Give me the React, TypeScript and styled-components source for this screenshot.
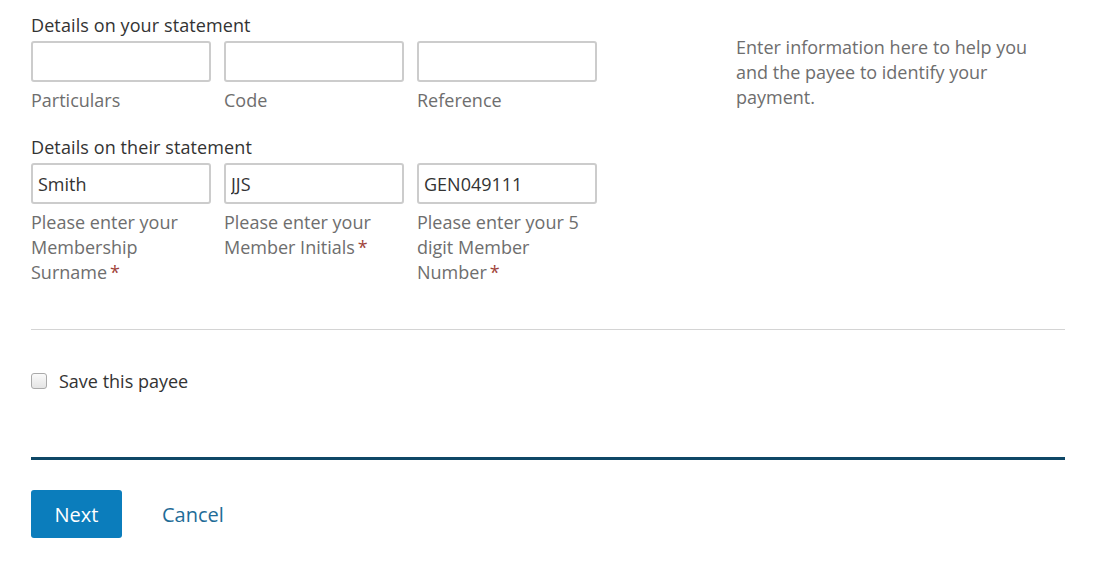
import * as React from 'react'
import styled, { createGlobalStyle } from 'styled-components'

const GlobalStyle = createGlobalStyle`
  body {
    margin: 0;
    background: #fff;
    font-family: 'Open Sans', 'Noto Sans', sans-serif;
    color: #333;
  }
`

const Page = styled.div`
  width: 1034px;
  padding: 13px 0 0 31px;
`

const TopSection = styled.div`
  display: flex;
  justify-content: space-between;
`

const FormColumn = styled.div`
  width: 565px;
`

const SectionTitle = styled.div`
  font-size: 18px;
  letter-spacing: 0.1px;
  line-height: 25px;
  color: #333;
  margin-bottom: 3px;
`

const FieldRow = styled.div`
  display: grid;
  grid-template-columns: repeat(3, 180px);
  column-gap: 13px;
  margin-bottom: 22px;
`

const Field = styled.div`
  display: flex;
  flex-direction: column;
`

const Input = styled.input`
  box-sizing: border-box;
  width: 180px;
  height: 41px;
  border: 2px solid #ccc;
  border-radius: 3px;
  padding: 0 5px;
  font-family: inherit;
  font-size: 18px;
  color: #333;
  outline: none;
`

const Hint = styled.div`
  font-size: 18px;
  line-height: 25px;
  color: #6e6e6e;
  margin-top: 6px;
`

const Star = styled.span`
  display: inline-block;
  color: #a0433a;
  margin-left: 3px;
`

const Aside = styled.div`
  width: 329px;
  margin-top: 22px;
  font-size: 18px;
  line-height: 25px;
  color: #6e6e6e;
`

const AsideText = styled.p`
  width: 306px;
  margin: 0;
`

const Divider = styled.hr<{ $thick?: boolean }>`
  border: none;
  margin: 0;
  height: ${p => (p.$thick ? '3px' : '1px')};
  background: ${p => (p.$thick ? '#0e4766' : '#d4d4d4')};
`

const CheckRow = styled.label`
  display: flex;
  align-items: center;
  gap: 12px;
  margin: 39px 0 64px;
  font-size: 18px;
  color: #333;
`

const Box = styled.span`
  box-sizing: border-box;
  width: 16px;
  height: 16px;
  border: 1px solid #aaa;
  border-radius: 3px;
  background: linear-gradient(#fafafa, #e4e4e4);
`

const Actions = styled.div`
  display: flex;
  align-items: center;
  gap: 40px;
  margin-top: 30px;
`

const PrimaryButton = styled.button`
  width: 91px;
  height: 48px;
  border: none;
  border-radius: 3px;
  background: #0b7dbc;
  color: #fff;
  font-family: inherit;
  font-size: 20px;
`

const LinkButton = styled.a`
  font-size: 20px;
  color: #1f6c97;
  text-decoration: none;
`

const yourFields = ['Particulars', 'Code', 'Reference']
const theirFields = [
  { value: 'Smith', hint: 'Please enter your Membership Surname' },
  { value: 'JJS', hint: 'Please enter your Member Initials' },
  { value: 'GEN049111', hint: 'Please enter your 5 digit Member Number' },
]

export default function App() {
  return (
    <Page>
      <GlobalStyle />
      <TopSection>
        <FormColumn>
          <SectionTitle>Details on your statement</SectionTitle>
          <FieldRow>
            {yourFields.map(label => (
              <Field key={label}>
                <Input />
                <Hint>{label}</Hint>
              </Field>
            ))}
          </FieldRow>
          <SectionTitle>Details on their statement</SectionTitle>
          <FieldRow>
            {theirFields.map(f => (
              <Field key={f.value}>
                <Input defaultValue={f.value} />
                <Hint>
                  {f.hint}
                  <Star>*</Star>
                </Hint>
              </Field>
            ))}
          </FieldRow>
        </FormColumn>
        <Aside>
          <AsideText>Enter information here to help you and the payee to identify your payment.</AsideText>
        </Aside>
      </TopSection>
      <Divider style={{ marginTop: 22 }} />
      <CheckRow>
        <Box />
        Save this payee
      </CheckRow>
      <Divider $thick />
      <Actions>
        <PrimaryButton>Next</PrimaryButton>
        <LinkButton href="#">Cancel</LinkButton>
      </Actions>
    </Page>
  )
}
